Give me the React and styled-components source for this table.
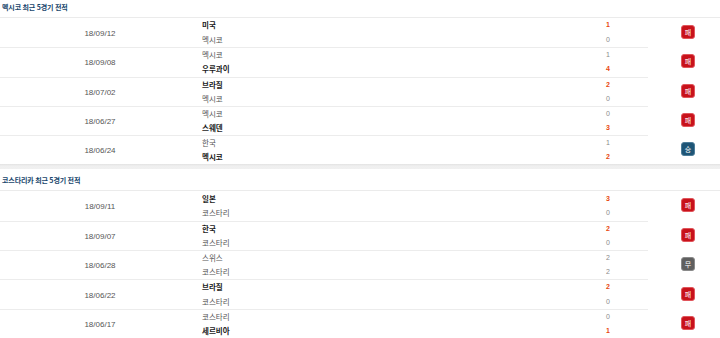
import React from 'react';
import styled, { createGlobalStyle } from 'styled-components';

const GlobalStyle = createGlobalStyle`
  html, body {
    margin: 0;
    padding: 0;
    background: #fff;
  }
  body {
    font-family: "Noto Sans CJK KR", "Noto Sans", sans-serif;
  }
`;

const sections = [
  {
    title: '멕시코 최근 5경기 전적',
    top: 17,
    games: [
      { date: '18/09/12', home: ['미국', 1], away: ['멕시코', 0], win: 'home', result: 'L' },
      { date: '18/09/08', home: ['멕시코', 1], away: ['우루과이', 4], win: 'away', result: 'L' },
      { date: '18/07/02', home: ['브라질', 2], away: ['멕시코', 0], win: 'home', result: 'L' },
      { date: '18/06/27', home: ['멕시코', 0], away: ['스웨덴', 3], win: 'away', result: 'L' },
      { date: '18/06/24', home: ['한국', 1], away: ['멕시코', 2], win: 'away', result: 'W' },
    ],
  },
  {
    title: '코스타리카 최근 5경기 전적',
    top: 21,
    games: [
      { date: '18/09/11', home: ['일본', 3], away: ['코스타리', 0], win: 'home', result: 'L' },
      { date: '18/09/07', home: ['한국', 2], away: ['코스타리', 0], win: 'home', result: 'L' },
      { date: '18/06/28', home: ['스위스', 2], away: ['코스타리', 2], win: null, result: 'D' },
      { date: '18/06/22', home: ['브라질', 2], away: ['코스타리', 0], win: 'home', result: 'L' },
      { date: '18/06/17', home: ['코스타리', 0], away: ['세르비아', 1], win: 'away', result: 'L' },
    ],
  },
];

const badges = {
  W: { label: '승', bg: '#1e5576', edge: '#4d7d99' },
  L: { label: '패', bg: '#c8121b', edge: '#e0555b' },
  D: { label: '무', bg: '#5f5f5f', edge: '#8a8a8a' },
};

export default function App() {
  return (
    <Page>
      <GlobalStyle />
      {sections.map((section, i) => (
        <Section key={section.title}>
          <Title $h={section.top}>{section.title}</Title>
          <List>
            {section.games.map((g) => {
              const badge = badges[g.result];
              return (
                <Row key={g.date}>
                  <DateCell>{g.date}</DateCell>
                  <TeamCell>
                    <Team $bold={g.win === 'home'}>{g.home[0]}</Team>
                    <Team $bold={g.win === 'away'}>{g.away[0]}</Team>
                  </TeamCell>
                  <ScoreCell>
                    <Score $hi={g.win === 'home'}>{g.home[1]}</Score>
                    <Score $hi={g.win === 'away'}>{g.away[1]}</Score>
                  </ScoreCell>
                  <ResultCell>
                    <Badge $bg={badge.bg} $edge={badge.edge}>
                      {badge.label}
                    </Badge>
                  </ResultCell>
                </Row>
              );
            })}
          </List>
          {i < sections.length - 1 && <Gap />}
        </Section>
      ))}
    </Page>
  );
}

const Page = styled.div`
  width: 720px;
  display: flex;
  flex-direction: column;
`;

const Section = styled.section`
  display: flex;
  flex-direction: column;
`;

const Title = styled.h3`
  margin: 0;
  height: ${({ $h }) => $h}px;
  padding: 0 0 6px 2px;
  display: flex;
  align-items: flex-end;
  box-sizing: border-box;
  font-size: 7px;
  font-weight: 700;
  line-height: 8px;
  color: #17456b;
  letter-spacing: -0.1px;
`;

const List = styled.div`
  border-top: 1px solid #ebebeb;
  display: flex;
  flex-direction: column;
`;

const Row = styled.div`
  display: grid;
  grid-template-columns: 200px 366px 82px 72px;
  height: 29.3px;
  & + & > div:not(:last-child) {
    border-top: 1px solid #ececec;
  }
  & + & > div:last-child {
    border-top: 1px solid transparent;
  }
  &:last-child > div:not(:last-child) {
    border-bottom: 1px solid #c9c9c9;
  }
  &:last-child > div:last-child {
    border-bottom: 1px solid transparent;
  }
`;

const cell = `
  box-sizing: border-box;
  display: flex;
`;

const DateCell = styled.div`
  ${cell}
  align-items: center;
  justify-content: center;
  font-family: "Liberation Sans", Arial, sans-serif;
  font-size: 8px;
  color: #555;
  padding-top: 1px;
`;

const TeamCell = styled.div`
  ${cell}
  flex-direction: column;
  justify-content: center;
  padding-left: 2px;
`;

const Team = styled.span`
  display: block;
  height: 14.2px;
  line-height: 13px;
  font-size: 7.5px;
  font-weight: ${({ $bold }) => ($bold ? 700 : 400)};
  color: ${({ $bold }) => ($bold ? '#1a1a1a' : '#555')};
`;

const ScoreCell = styled.div`
  ${cell}
  flex-direction: column;
  justify-content: center;
  align-items: center;
  padding-left: 2px;
`;

const Score = styled.span`
  display: block;
  height: 14.2px;
  line-height: 13px;
  font-family: "Liberation Sans", Arial, sans-serif;
  font-size: 7px;
  font-weight: ${({ $hi }) => ($hi ? 700 : 400)};
  color: ${({ $hi }) => ($hi ? '#e8470f' : '#8a8a8a')};
`;

const ResultCell = styled.div`
  ${cell}
  align-items: center;
  justify-content: flex-start;
  padding: 0 0 2px 33px;
`;

const Badge = styled.span`
  width: 14px;
  height: 14px;
  box-sizing: border-box;
  border-radius: 3px;
  background: ${({ $bg }) => $bg};
  border: 1px solid ${({ $edge }) => $edge};
  color: #fff;
  font-size: 7px;
  line-height: 12px;
  text-align: center;
`;

const Gap = styled.div`
  height: 5px;
  background: linear-gradient(#e2e2e2, #efefef 40%, #f0f0f0);
`;
